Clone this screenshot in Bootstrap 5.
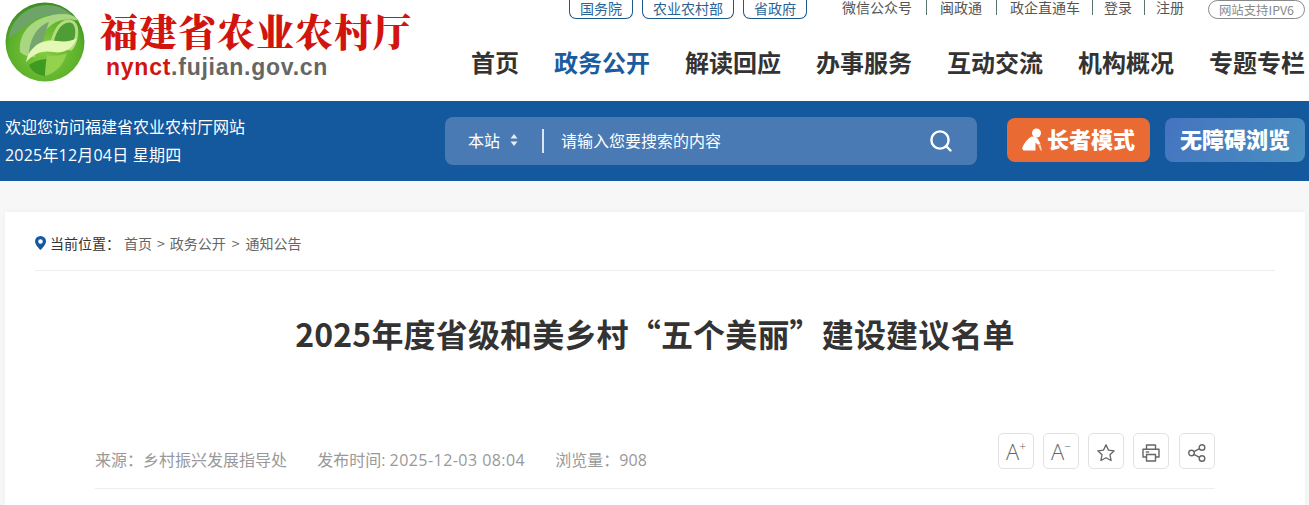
<!DOCTYPE html>
<html lang="zh-CN">
<head>
    <meta charset="UTF-8">
    <meta name="viewport" content="width=device-width, initial-scale=1.0">
    <title>福建省农业农村厅</title>
    <link href="https://cdn.jsdelivr.net/npm/bootstrap@5.3.0/dist/css/bootstrap.min.css" rel="stylesheet">
    <style>
        body { font-family: "Noto Sans CJK SC", "Noto Sans", sans-serif; background: #f7f7f7; color: #333; }
        a { color: inherit; text-decoration: none; }
        .site-head { height: 101px; background: #fff; padding: 0 4px 0 5px; overflow: hidden; }
        .logo-mark { width: 80px; height: 80px; margin-top: 2px; }
        .logo-words { margin-left: 15px; width: 340px; }
        .logo-cn { font-family: "Noto Serif CJK SC", "Noto Sans CJK SC", serif; font-size: 38px; font-weight: 900; line-height: 38px; color: #d2140f; letter-spacing: 1px; margin-top: 11px; white-space: nowrap; }
        .logo-en { font-family: "Liberation Sans", sans-serif; font-size: 23px; font-weight: 700; line-height: 26px; color: #666; letter-spacing: .75px; margin: 5px 0 0 6px; }
        .logo-en b { color: #d2140f; }
        .top-row { height: 19px; font-size: 14px; line-height: 14px; color: #555; }
        .pill-link { border: 1px solid #1d5a8c; border-top: 0; border-radius: 0 0 7px 7px; color: #2a6496; padding: 1px 10px 0; height: 19px; white-space: nowrap; }
        .pill-group { gap: 9px; margin-right: 35px; }
        .top-links a { padding: 0 12px 0 11px; border-right: 1px solid #5a7570; height: 15px; white-space: nowrap; }
        .top-links a:nth-child(1), .top-links a:nth-child(2) { padding-right: 14px; }
        .top-links a:nth-child(2), .top-links a:nth-child(3) { padding-left: 13px; }
        .top-links a:last-child { border-right: 0; padding-right: 0; }
        .top-links a:first-child { padding-left: 0; }
        .ipv6-pill { border: 1px solid #888; border-radius: 10px; color: #888; font-size: 12.4px; line-height: 18px; padding: 0 10px; height: 19px; margin-left: 24px; white-space: nowrap; }
        .main-nav { gap: 35px; margin-top: 27px; font-size: 24px; font-weight: 700; line-height: 32px; white-space: nowrap; }
        .main-nav .on { color: #1a5c9e; }
        .blue-band { height: 80px; background: #14589e; color: #fff; padding: 0 4px 0 5px; }
        .hello { width: 440px; font-size: 16px; line-height: 28px; margin-top: -2px; }
        .hello .date-line { font-family: "Open Sans", "Noto Sans CJK SC", sans-serif; letter-spacing: .2px; margin-top: 1px; }
        .search-box { width: 532px; height: 48px; background: #4a7ab3; border-radius: 8px; font-size: 16px; padding: 0 24px 0 23px; }
        .search-box > div { padding-bottom: 2px; }
        .search-scope { width: 50px; }
        .search-line { width: 2px; height: 24px; background: #dce6f2; margin: 0 17px 0 24px; padding: 0; }
        .band-btn { height: 44px; border-radius: 8px; font-size: 22px; font-weight: 900; color: #fff; white-space: nowrap; margin-top: -2px; padding-bottom: 3px; }
        .btn-elder { width: 143px; margin-left: 30px; background: #ea6a34; }
        .btn-access { width: 140px; margin-left: 15px; background: linear-gradient(120deg, #4573c0, #4a90c0); }
        .paper { background: #fff; margin: 31px 4px 0 5px; padding: 0 30px; box-shadow: 0 0 6px rgba(0,0,0,.04); height: 293px; }
        .crumbs { height: 59px; border-bottom: 1px solid #eee; font-size: 14px; color: #666; }
        .crumbs .here { color: #333; margin-right: -6px; width: 80px; }
        .crumbs .sep { margin: 0 5px; }
        .crumbs .sep:last-of-type { margin: 0 6px; }
        .doc-title { font-size: 32px; font-weight: 700; line-height: 44px; color: #333; text-align: center; margin: 40px 0 0; letter-spacing: .17px; }
        .doc-meta { margin: 78px 60px 0; height: 56px; border-bottom: 1px solid #eee; color: #999; font-family: "Open Sans", "Noto Sans CJK SC", sans-serif; font-size: 16px; padding-bottom: 19px; }
        .doc-meta .meta-text { margin-bottom: -3px; }
        .doc-meta .meta-item { margin-right: 26px; }
        .doc-meta .meta-date { letter-spacing: .45px; }
        .tool-btn { width: 36px; height: 36px; border: 1px solid #e2e2e2; border-radius: 5px; background: #fff; color: #666; font-size: 22px; font-weight: 300; line-height: 1; padding: 0; }
        .tool-btn sup { font-size: 12px; top: -9px; }
        .tool-btn.is-last { margin-left: 1px; }
        .tool-set { gap: 9px; }
    </style>
</head>
<body>
    <!-- header -->
    <header class="site-head d-flex justify-content-between">
        <div class="d-flex">
            <svg class="logo-mark" viewBox="0 0 80 80">
                <defs>
                    <radialGradient id="ball" cx="50%" cy="60%" r="60%">
                        <stop offset="0" stop-color="#86cc40"/>
                        <stop offset=".75" stop-color="#5bb02a"/>
                        <stop offset="1" stop-color="#3a8a20"/>
                    </radialGradient>
                </defs>
                <circle cx="40" cy="40" r="39.500" fill="url(#ball)"/>
                <path d="M4 36C6 18 22 3 42 3c12 0 22 6 28 14-12-5-30-6-42 2-12 8-18 14-24 17z" fill="#6fa468"/>
                <path d="M15 50C13 30 28 13 58 12c8 0 12 2 16 7-6-2-14-2-20 0-14 5-22 20-24 36-5 0-11-1-15-5z" fill="#a9d680"/>
                <path d="M24 54C24 38 32 24 44 20c-3 8-7 22-8 28-4 1-8 3-12 6z" fill="#76a56d"/>
                <path d="M46 46C48 32 54 19 64 19c7 0 9 8 7 17-1 6-3 9-5 11-7-1-14-1-20-1z" fill="#4f9d35" stroke="#b5dc80" stroke-width="3"/>
                <path d="M21 60c2-11 10-19 20-21 11-2 18 4 31-3-4 11-13 16-24 14-12-2-19 2-27 10z" fill="#e2f8b4"/>
                <path d="M24 63c6-4 12-6 20-6-3 7-4 12-4 17-8-1-14-5-16-11z" fill="#3f9a22"/>
                <path d="M42 53c6 1 13 1 20-2-3 10-10 20-22 23 0-7 1-14 2-21z" fill="#93d24e"/>
            </svg>
            <div class="logo-words">
                <div class="logo-cn">福建省农业农村厅</div>
                <div class="logo-en"><b>nynct</b>.fujian.gov.cn</div>
            </div>
        </div>
        <div class="d-flex flex-column align-items-end">
            <div class="top-row d-flex align-items-start">
                <div class="pill-group d-flex">
                    <a class="pill-link" href="#">国务院</a>
                    <a class="pill-link" href="#">农业农村部</a>
                    <a class="pill-link" href="#">省政府</a>
                </div>
                <div class="top-links d-flex">
                    <a href="#">微信公众号</a>
                    <a href="#">闽政通</a>
                    <a href="#">政企直通车</a>
                    <a href="#">登录</a>
                    <a href="#">注册</a>
                </div>
                <a class="ipv6-pill" href="#">网站支持IPV6</a>
            </div>
            <nav class="main-nav d-flex">
                <a href="#">首页</a>
                <a class="on" href="#">政务公开</a>
                <a href="#">解读回应</a>
                <a href="#">办事服务</a>
                <a href="#">互动交流</a>
                <a href="#">机构概况</a>
                <a href="#">专题专栏</a>
            </nav>
        </div>
    </header>

    <!-- blue band -->
    <section class="blue-band d-flex align-items-center">
        <div class="hello">
            <div>欢迎您访问福建省农业农村厅网站</div>
            <div class="date-line">2025年12月04日 星期四</div>
        </div>
        <div class="search-box d-flex align-items-center">
            <div class="search-scope d-flex align-items-center justify-content-between">本站
                <svg width="8" height="14" viewBox="0 0 8 14" fill="#e8eef6"><path d="M4 1l3.500 4.500h-7zM4 13L.5 8.500h7z"/></svg>
            </div>
            <div class="search-line"></div>
            <div class="flex-grow-1">请输入您要搜索的内容</div>
            <svg width="24" height="24" viewBox="0 0 24 24" fill="none" stroke="#fff" stroke-width="2.400" stroke-linecap="round"><circle cx="11" cy="11" r="8.600"/><path d="M17.500 17.500l4 4"/></svg>
        </div>
        <a class="band-btn btn-elder d-flex align-items-center justify-content-center" href="#">
            <svg class="me-1" width="21" height="24" viewBox="0 0 21 24"><circle cx="14.500" cy="6" r="4.500" fill="#fff"/><path d="M9.500 9.500C5 12 2 16 0 21.500l1.500 2h12v-8l2 2 3-.5-2-4c-1-2-3-3.500-7-3.500z" fill="#fff"/><path d="M16 17.500h2.500l1.500 6h-1.500z" fill="#f8cfb2"/></svg>
            长者模式
        </a>
        <a class="band-btn btn-access d-flex align-items-center justify-content-center" href="#">无障碍浏览</a>
    </section>

    <!-- article head -->
    <main class="paper">
        <div class="crumbs d-flex align-items-center pt-1">
            <svg class="me-1" width="11" height="14" viewBox="0 0 11 14"><path d="M5.500 0a5.500 5.500 0 0 0-5.500 5.500C0 9 5.500 14 5.500 14S11 9 11 5.500A5.500 5.500 0 0 0 5.500 0zm0 7.800a2.300 2.300 0 1 1 0-4.600 2.300 2.300 0 0 1 0 4.600z" fill="#14589e"/></svg>
            <span class="here">当前位置：</span>
            <a href="#">首页</a><span class="sep">&gt;</span><a href="#">政务公开</a><span class="sep">&gt;</span><a href="#">通知公告</a>
        </div>
        <h1 class="doc-title">2025年度省级和美乡村“五个美丽”建设建议名单</h1>
        <div class="doc-meta d-flex justify-content-between align-items-end">
            <div class="meta-text">
                <span class="meta-item">来源：乡村振兴发展指导处</span>
                <span class="meta-item">发布时间: <span class="meta-date">2025-12-03 08:04</span></span>
                <span>浏览量：908</span>
            </div>
            <div class="tool-set d-flex">
                <button class="tool-btn" type="button">A<sup>+</sup></button>
                <button class="tool-btn" type="button">A<sup>−</sup></button>
                <button class="tool-btn" type="button">
                    <svg width="20" height="20" viewBox="0 0 20 20" fill="none" stroke="#666" stroke-width="1.300" stroke-linejoin="round"><path d="M10 1.800l2.500 5.300 5.700.7-4.200 4 1.100 5.700-5.100-2.800-5.100 2.800 1.100-5.700-4.200-4 5.700-.7z"/></svg>
                </button>
                <button class="tool-btn" type="button">
                    <svg width="20" height="20" viewBox="0 0 20 20" fill="none" stroke="#666" stroke-width="1.400" stroke-linejoin="round"><path d="M5.500 6V2h9v4M5.500 14H2V6.200h16V14h-3.500"/><path d="M5.500 11.500h9V18h-9z"/><path d="M4.800 9h3.400"/></svg>
                </button>
                <button class="tool-btn is-last" type="button">
                    <svg width="20" height="20" viewBox="0 0 20 20" fill="none" stroke="#666" stroke-width="1.400"><circle cx="15" cy="4.500" r="2.800"/><circle cx="4.500" cy="10" r="2.800"/><circle cx="15" cy="15.500" r="2.800"/><path d="M7 8.700l5.500-3M7 11.300l5.500 3"/></svg>
                </button>
            </div>
        </div>
    </main>
    <script src="https://cdn.jsdelivr.net/npm/bootstrap@5.3.0/dist/js/bootstrap.bundle.min.js"></script>
</body>
</html>
